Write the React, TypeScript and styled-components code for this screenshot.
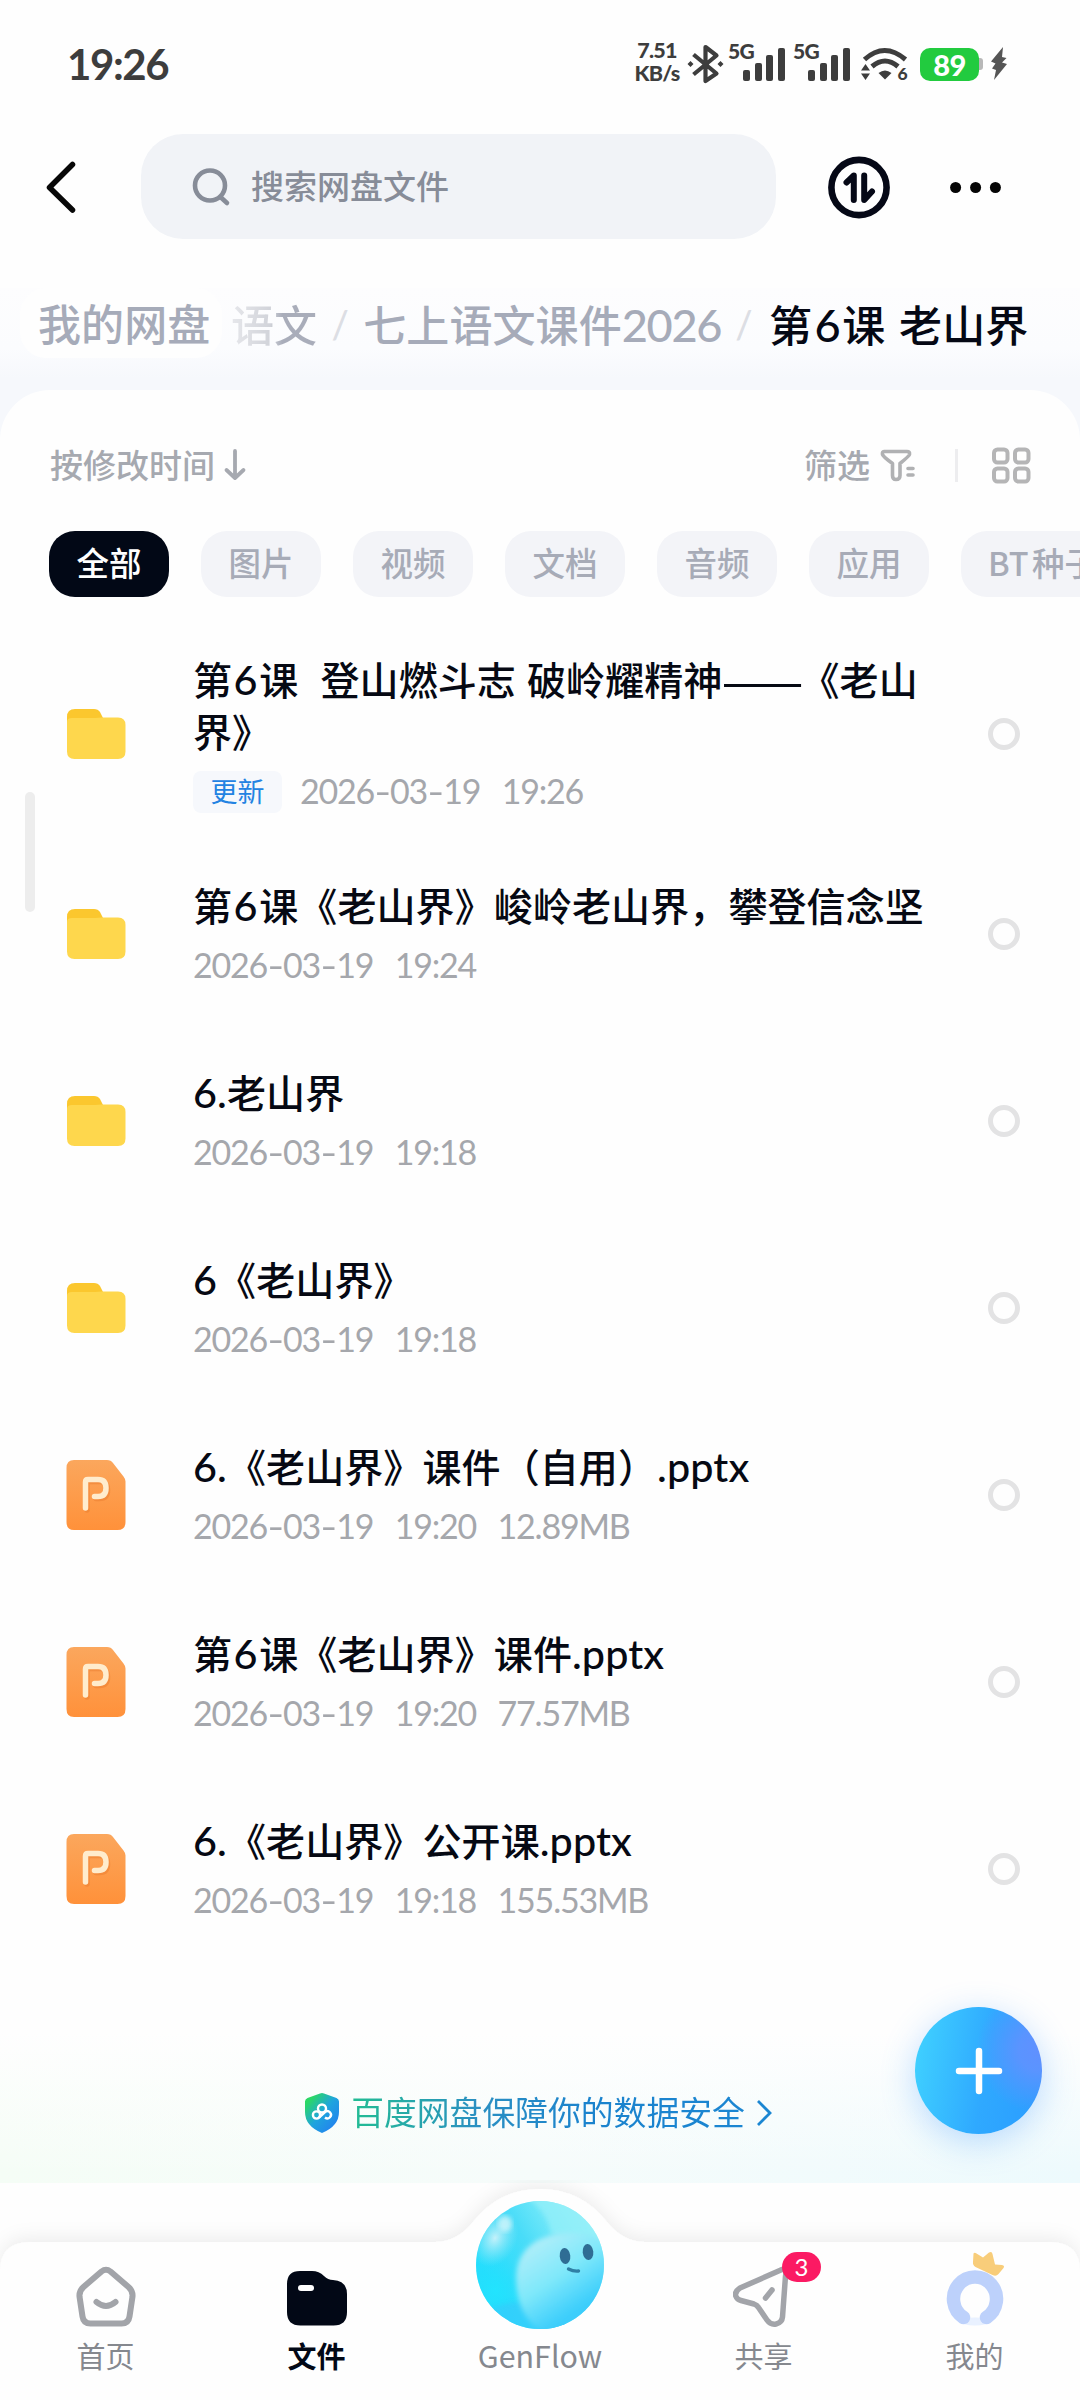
import React from "react";
import styled, { createGlobalStyle } from "styled-components";

const cjk = `"Noto Sans CJK SC", sans-serif`;

const Global = createGlobalStyle`
  html, body { margin: 0; padding: 0; background: #fefefe; }
  *, *::before, *::after { box-sizing: border-box; }
`;

const Screen = styled.div`
  position: relative;
  display: flex;
  flex-direction: column;
  width: 1080px;
  height: 2400px;
  overflow: hidden;
  background: #fefefe;
  font-family: ${cjk};
`;

const Latin = styled.span<{ $scale: number; $gap: string; $side?: string }>`
  font-family: Lato, ${cjk};
  font-size: ${(p) => p.$scale}em;
  line-height: 0;
  letter-spacing: ${(p) => p.$gap};
  margin: 0 ${(p) => p.$side ?? "0"};
`;
const LongDash = styled.span`
  display: inline-block;
  width: 78px;
  height: 50px;
  vertical-align: bottom;
  text-align: center;
  white-space: nowrap;
  letter-spacing: -1px;
  transform: scaleX(1.24);
`;

type MixedProps = { text: string; scale: number; gap: string; side?: string };
function Mixed({ text, scale, gap, side }: MixedProps) {
  return (
    <>
      {text.split(/([A-Za-z0-9.:\-]+|——)/).map((part, i, all) => {
        if (i % 2 === 0) return part;
        if (part === "——") return <LongDash key={i}>{part}</LongDash>;
        const inside = /^\d+$/.test(part) && all[0] !== "";
        return (
          <Latin key={i} $scale={scale} $gap={gap} $side={inside ? side : undefined}>
            {part}
          </Latin>
        );
      })}
    </>
  );
}

/* ---------- status bar ---------- */
const StatusBar = styled.div`
  display: flex;
  justify-content: space-between;
  align-items: center;
  height: 128px;
  padding: 0 73px 0 67px;
  color: #3d3d3d;
  font-family: Lato, sans-serif;
`;
const Clock = styled.div`
  font-size: 42px;
  font-weight: 700;
  letter-spacing: -1.4px;
`;
const StatusIcons = styled.div`
  display: flex;
  align-items: center;
`;
const Speed = styled.div`
  width: 48px;
  margin-right: 6px;
  padding-bottom: 4px;
  text-align: center;
  font-size: 21.5px;
  font-weight: 900;
  line-height: 23.5px;
  letter-spacing: -0.8px;
  white-space: nowrap;
`;
const BluetoothIcon = styled.svg`
  margin-right: -4px;
`;
const Network = styled.div`
  display: flex;
  width: 57px;
  height: 40px;
  margin-left: 8px;
`;
const NetworkType = styled.span`
  width: 15px;
  font-size: 21px;
  font-weight: 900;
  line-height: 13px;
  letter-spacing: -0.8px;
`;
const Bars = styled.div`
  display: flex;
  align-items: flex-end;
  gap: 4.6px;
  height: 36.5px;
`;
const Bar = styled.i<{ $h: number }>`
  width: 7px;
  height: ${(p) => p.$h}px;
  border-radius: 2px;
  background: #3d3d3d;
`;
const WifiIcon = styled.svg`
  margin-left: 11px;
`;
const Battery = styled.div`
  display: flex;
  align-items: center;
  justify-content: center;
  width: 59px;
  height: 33px;
  margin-left: 9px;
  border-radius: 10px;
  background: #22cb3f;
  color: #fff;
  font-size: 29px;
  font-weight: 900;
  letter-spacing: -0.5px;
`;
const BatteryTip = styled.i`
  width: 4px;
  height: 12px;
  margin-right: 8px;
  border-radius: 0 3px 3px 0;
  background: #b8b8b8;
`;

/* ---------- header ---------- */
const Header = styled.header`
  display: flex;
  align-items: center;
  height: 117px;
  padding-left: 40px;
`;
const SearchBox = styled.div`
  display: flex;
  align-items: center;
  width: 635px;
  height: 105px;
  margin-left: 61px;
  margin-right: 50px;
  padding-left: 50px;
  border-radius: 42px;
  background: #f1f3f7;
  color: #878c98;
  font-size: 33px;
  font-weight: 500;
`;
const SearchHint = styled.span`
  margin-left: 20px;
  padding-bottom: 3px;
`;
const MoreIcon = styled.svg`
  margin-left: 55px;
`;

/* ---------- breadcrumb ---------- */
const PathArea = styled.div`
  margin-top: 43px;
  height: 162px;
  background: linear-gradient(#fdfdfe 0px, #fbfcfe 60px, #f6f8fc 90px);
`;
const Path = styled.nav`
  display: flex;
  align-items: center;
  height: 70px;
  padding-left: 20px;
  font-size: 43px;
  font-weight: 500;
  letter-spacing: 0.1px;
  color: #a6abb9;
  white-space: nowrap;
`;
const PathRoot = styled.span`
  width: 202px;
  height: 70px;
  padding-left: 18px;
  border-radius: 26px;
  line-height: 68px;
  background: #fefefe;
`;
const PathFaded = styled.span`
  margin-left: 9px;
  background: linear-gradient(90deg, #e6e7eb 0%, #d2d4da 45%, #a9adba 60%);
  -webkit-background-clip: text;
  color: transparent;
`;
const Slash = styled.span`
  width: 46px;
  text-align: center;
  font-family: Lato, sans-serif;
  font-size: 38px;
  color: #dcdee4;
`;
const PathCurrent = styled.span`
  margin-left: 2px;
  color: #050814;
  word-spacing: 4px;
`;

/* ---------- file panel ---------- */
const Panel = styled.main`
  display: flex;
  flex-direction: column;
  margin-top: -60px;
  height: 1793px;
  border-radius: 50px 50px 0 0;
  background: #fefefe;
  z-index: 1;
`;
const Tools = styled.div`
  display: flex;
  align-items: center;
  height: 74px;
  margin-top: 38px;
  padding: 0 48px 0 50px;
  color: #a6a9b0;
  font-size: 33px;
  font-weight: 500;
`;
const ToolText = styled.span<{ $push?: boolean }>`
  margin-left: ${(p) => (p.$push ? "auto" : 0)};
  padding-bottom: 3px;
`;
const SortArrow = styled.svg`
  margin-left: 6px;
`;
const FunnelIcon = styled.svg`
  margin-left: 9px;
`;
const Divider = styled.i`
  width: 3px;
  height: 33px;
  margin: 0 33px 0 38px;
  background: #ededef;
`;
const Chips = styled.div`
  display: flex;
  flex: none;
  gap: 32px;
  margin-top: 29px;
  padding-left: 49px;
  overflow: hidden;
`;
const Chip = styled.span<{ $active?: boolean }>`
  flex: none;
  min-width: 120px;
  height: 66px;
  padding: 0 27px;
  border-radius: 26px;
  background: ${(p) => (p.$active ? "#020816" : "#f3f4f8")};
  color: ${(p) => (p.$active ? "#fff" : "#a7abb7")};
  font-size: 32.5px;
  font-weight: 500;
  line-height: 62px;
  text-align: center;
  word-spacing: -4px;
`;
const List = styled.ul`
  list-style: none;
  margin: 30.5px 0 0;
  padding: 0;
`;
const Item = styled.li<{ $tall?: boolean }>`
  display: flex;
  align-items: center;
  height: ${(p) => (p.$tall ? 213 : 187)}px;
  padding: 0 60px 0 66px;
`;
const Info = styled.div`
  flex: 1;
  margin-left: 67px;
  padding-bottom: 5px;
`;
const Name = styled.div`
  width: 760px;
  font-size: 39px;
  font-weight: 500;
  line-height: 52px;
  letter-spacing: 0.1px;
  word-spacing: 2.2px;
  color: #060913;
  white-space: pre-wrap;
`;
const Meta = styled.div`
  display: flex;
  align-items: center;
  height: 42px;
  margin-top: 14px;
  font-family: Lato, sans-serif;
  font-size: 34px;
  letter-spacing: -1.2px;
  color: #a5a7ac;
`;
const MetaPart = styled.span`
  margin-right: 21.5px;
`;
const Hyphen = styled.span`
  display: inline-block;
  width: 16px;
  text-align: center;
  transform: scaleX(1.35);
`;
const Tag = styled.span`
  width: 89px;
  height: 42px;
  margin-top: 3px;
  margin-right: 18px;
  border-radius: 8px;
  background: #f6f8fc;
  color: #2383e2;
  font-family: ${cjk};
  font-size: 27px;
  letter-spacing: 0;
  line-height: 40px;
  text-align: center;
`;
const Radio = styled.i`
  width: 32px;
  height: 32px;
  border: 5px solid #e3e3e4;
  border-radius: 50%;
`;
const ScrollThumb = styled.i`
  position: absolute;
  left: 25px;
  top: 792px;
  width: 10px;
  height: 120px;
  border-radius: 5px;
  background: #ededed;
  z-index: 2;
`;

/* ---------- safety banner ---------- */
const Banner = styled.div`
  display: flex;
  align-items: center;
  justify-content: center;
  height: 150px;
  margin-top: auto;
  padding: 9px 4px 0 0;
  background: linear-gradient(#fefefe, rgba(254, 254, 254, 0) 95%),
    linear-gradient(90deg, #f5fdf6, #f6fcfb 50%, #edfafd);
  font-size: 32.8px;
`;
const BannerText = styled.span`
  margin-left: 11px;
  padding-bottom: 4px;
  background: linear-gradient(90deg, #22bd93, #2b90c2 32%, #1b83cd 60%, #1b86d2);
  -webkit-background-clip: text;
  color: transparent;
`;
const BannerArrow = styled.svg`
  margin-left: 11px;
`;
const AddButton = styled.button`
  position: absolute;
  left: 915px;
  top: 2007px;
  display: flex;
  align-items: center;
  justify-content: center;
  width: 127px;
  height: 127px;
  padding: 0;
  border: 0;
  border-radius: 50%;
  background: radial-gradient(circle at 98% 34%, #6090ff 0%, #5a94ff 14%, rgba(60, 160, 255, 0) 42%),
    linear-gradient(100deg, #3fd0ff 5%, #2fa9ff 55%, #2a9cff);
  box-shadow: 0 8px 34px rgba(60, 150, 255, 0.32);
  z-index: 3;
`;

/* ---------- tab bar ---------- */
const TabBar = styled.nav`
  position: relative;
  display: flex;
  height: 217px;
  z-index: 2;
`;
const TabBack = styled.svg`
  position: absolute;
  left: 0;
  top: -3px;
`;
const Tab = styled.div<{ $wide?: boolean; $active?: boolean }>`
  position: relative;
  display: flex;
  flex-direction: column;
  align-items: center;
  width: ${(p) => (p.$wide ? 236 : 211)}px;
  padding-top: ${(p) => (p.$wide ? 15 : 83)}px;
  color: ${(p) => (p.$active ? "#020816" : "#85888e")};
  font-weight: ${(p) => (p.$active ? 700 : 400)};
`;
const TabLabel = styled.span<{ $latin?: boolean }>`
  margin-top: ${(p) => (p.$latin ? 3 : 7)}px;
  font-size: ${(p) => (p.$latin ? 30.4 : 29)}px;
  line-height: 40px;
`;
const Badge = styled.span`
  position: absolute;
  left: 124px;
  top: 69px;
  width: 39px;
  height: 30px;
  border-radius: 15px;
  background: #fb1a63;
  color: #fff;
  font-family: Lato, sans-serif;
  font-size: 24px;
  line-height: 29px;
  text-align: center;
`;

/* ---------- icons ---------- */
const FolderIcon = () => (
  <svg width="60" height="52" viewBox="0 0 60 52">
    <path d="M1 9q0-8 8-8h19q4 0 6 3l3 6v8H1z" fill="#fbc72e" />
    <path d="M1 14q0-4 5-4h23l7-.5h16q7.500 0 7.500 7.500v26.500q0 7.500-7.500 7.500H8.500q-7.500 0-7.500-7.500z" fill="#fed74d" />
  </svg>
);
const SlidesIcon = () => (
  <svg width="60" height="72" viewBox="0 0 60 72">
    <defs>
      <linearGradient id="slides" x1="0" y1="0" x2="0" y2="1">
        <stop offset="0" stopColor="#fba75d" />
        <stop offset="1" stopColor="#ff913a" />
      </linearGradient>
    </defs>
    <path d="M8 1h33q4 0 6 3l10.500 13.500q2 2.500 2 5V63q0 8-8 8H8q-7.500 0-7.500-8V9Q.5 1 8 1z" fill="url(#slides)" />
    <path d="M19.500 49V23q0-2.500 2.500-2.500h10q8 0 8 8.500t-8 8.500h-3.500" transform="translate(1.500 2)" fill="none" stroke="#e97b2c" strokeOpacity=".45" strokeWidth="5.500" strokeLinecap="round" />
    <path d="M19.500 49V23q0-2.500 2.500-2.500h10q8 0 8 8.500t-8 8.500h-3.500" fill="none" stroke="#ffeccd" strokeWidth="5.500" strokeLinecap="round" />
  </svg>
);

type File = { name: React.ReactNode; meta: string[]; kind: "folder" | "slides"; tag?: string };
const title = (t: string) => <Mixed text={t} scale={1.06} gap="0.1px" side="1.5px" />;
const files: File[] = [
  { name: title("第6课  登山燃斗志 破岭耀精神——《老山界》"), meta: ["2026-03-19", "19:26"], kind: "folder", tag: "更新" },
  { name: title("第6课《老山界》峻岭老山界，攀登信念坚"), meta: ["2026-03-19", "19:24"], kind: "folder" },
  { name: title("6.老山界"), meta: ["2026-03-19", "19:18"], kind: "folder" },
  { name: title("6《老山界》"), meta: ["2026-03-19", "19:18"], kind: "folder" },
  { name: title("6.《老山界》课件（自用）.pptx"), meta: ["2026-03-19", "19:20", "12.89MB"], kind: "slides" },
  { name: title("第6课《老山界》课件.pptx"), meta: ["2026-03-19", "19:20", "77.57MB"], kind: "slides" },
  { name: title("6.《老山界》公开课.pptx"), meta: ["2026-03-19", "19:18", "155.53MB"], kind: "slides" },
];
const spaced = (t: string) => t.split(/(-)/).map((s, i) => (s === "-" ? <Hyphen key={i}>-</Hyphen> : s));

export default function App() {
  return (
    <Screen lang="zh-CN">
      <Global />
      <StatusBar>
        <Clock>19:26</Clock>
        <StatusIcons>
          <Speed>7.51<br />KB/s</Speed>
          <BluetoothIcon width="37" height="40" viewBox="0 0 37 40" fill="none" stroke="#3d3d3d" strokeWidth="4.200" strokeLinejoin="round">
            <path d="M6.500 10.500l23 19L18.500 37V3l11 8.500-23 19" />
            <path d="M3.500 17l3 3-3 3-3-3zM33.500 17l3 3-3 3-3-3z" fill="#3d3d3d" stroke="none" />
          </BluetoothIcon>
          {[0, 1].map((n) => (
            <Network key={n}>
              <NetworkType>5G</NetworkType>
              <Bars>
                {[11, 17.5, 26, 33].map((h) => <Bar key={h} $h={h} />)}
              </Bars>
            </Network>
          ))}
          <WifiIcon width="50" height="40" viewBox="0 -2 50 40" fill="none" stroke="#3d3d3d" strokeWidth="5">
            <path d="M3.500 13.500q20-18 41 0M11 20.500q13-11 26 0" />
            <path d="M24 33.500l-6.500-6.500q6.500-5 13 0z" fill="#3d3d3d" stroke="none" />
            <path d="M0 24.500l4.500-6.500 4.500 6.500zM0 27.500h9L4.500 34z" fill="#3d3d3d" stroke="none" />
            <text x="36.500" y="34" fontSize="17.500" fontWeight="900" fontFamily="Lato" fill="#3d3d3d" stroke="none">6</text>
          </WifiIcon>
          <Battery>89</Battery>
          <BatteryTip />
          <svg width="16" height="34" viewBox="0 0 16 34">
            <path d="M12 0L0 14.500l4.500 2L1 21.500l4 1.500L3 33l13-16-5-1.500L15.500 11l-4.500-1z" fill="#555" />
          </svg>
        </StatusIcons>
      </StatusBar>

      <Header>
        <svg width="40" height="56" viewBox="0 0 40 56" fill="none" stroke="#080808" strokeWidth="5.500" strokeLinecap="round" strokeLinejoin="round">
          <path d="M32.500 5.500L9.500 28.500l23 22.500" />
        </svg>
        <SearchBox>
          <svg width="40" height="40" viewBox="0 0 40 40" fill="none" stroke="#878c98" strokeWidth="4.600" strokeLinecap="round">
            <circle cx="19" cy="18.500" r="15" />
            <path d="M30 30.500l6 5.500" />
          </svg>
          <SearchHint>搜索网盘文件</SearchHint>
        </SearchBox>
        <svg width="66" height="66" viewBox="0 0 66 66" fill="none" stroke="#050816" strokeLinecap="round" strokeLinejoin="round">
          <circle cx="33" cy="33.500" r="27.600" strokeWidth="6.600" />
          <path d="M27.800 46V21.500l-7.300 7M38.200 21.500V46l7.800-8.500" strokeWidth="6" />
        </svg>
        <MoreIcon width="58" height="20" viewBox="0 0 58 20">
          {[8.6, 28.6, 48.4].map((x) => <circle key={x} cx={x} cy="10.500" r="5.500" fill="#050505" />)}
        </MoreIcon>
      </Header>

      <PathArea>
        <Path>
          <PathRoot>我的网盘</PathRoot>
          <PathFaded>语文</PathFaded>
          <Slash>/</Slash>
          <span><Mixed text="七上语文课件2026" scale={1.05} gap="-1.4px" side="0px" /></span>
          <Slash>/</Slash>
          <PathCurrent><Mixed text="第6课 老山界" scale={1.05} gap="-1px" side="2.5px" /></PathCurrent>
        </Path>
      </PathArea>

      <Panel>
        <Tools>
          <ToolText>按修改时间</ToolText>
          <SortArrow width="28" height="34" viewBox="0 0 28 34" fill="none" stroke="#a6a9b0" strokeWidth="3.800" strokeLinecap="round" strokeLinejoin="round">
            <path d="M14 3v27M5.500 22l8.500 8 8.500-8" />
          </SortArrow>
          <ToolText $push>筛选</ToolText>
          <FunnelIcon width="38" height="34" viewBox="0 0 38 34" fill="none" stroke="#b0b1b3" strokeWidth="3.600" strokeLinecap="round" strokeLinejoin="round">
            <path d="M5 3.500h23q3 0 2.500 3-.3 1.500-9.500 9v12q0 4-4 4-3.500 0-3.500-4v-12Q4 8.500 3.500 6.500 3 3.500 5 3.500zM29 20.500h5M29 27h5" />
          </FunnelIcon>
          <Divider />
          <svg width="41" height="37" viewBox="0 0 41 37" fill="none" stroke="#b5b5b6" strokeWidth="4">
            <rect x="3" y="2.500" width="13.500" height="13" rx="3.500" />
            <rect x="24" y="2.500" width="13.500" height="13" rx="3.500" />
            <rect x="3" y="21.500" width="13.500" height="13" rx="3.500" />
            <rect x="24" y="21.500" width="13.500" height="13" rx="3.500" />
          </svg>
        </Tools>
        <Chips>
          {["全部", "图片", "视频", "文档", "音频", "应用", "BT 种子"].map((c, i) => <Chip key={c} $active={i === 0}>{c}</Chip>)}
        </Chips>
        <List>
          {files.map((f, i) => (
            <Item key={i} $tall={i === 0}>
              {f.kind === "folder" ? <FolderIcon /> : <SlidesIcon />}
              <Info>
                <Name>{f.name}</Name>
                <Meta>
                  {f.tag && <Tag>{f.tag}</Tag>}
                  {f.meta.map((m) => <MetaPart key={m}>{spaced(m)}</MetaPart>)}
                </Meta>
              </Info>
              <Radio />
            </Item>
          ))}
        </List>
        <Banner>
          <svg width="36" height="42" viewBox="0 0 36 42">
            <defs>
              <linearGradient id="shield" x1="0" y1="0" x2="1" y2="1">
                <stop offset=".15" stopColor="#2bd865" />
                <stop offset=".5" stopColor="#1fa5dd" />
                <stop offset="1" stopColor="#2377f5" />
              </linearGradient>
            </defs>
            <path d="M16 1.500q2-1 4 0l12.500 4.500q2.500 1 2.500 3.500V20q0 14-17 21Q1 34 1 20V9.500Q1 7 3.500 6z" fill="url(#shield)" />
            <g fill="none" stroke="#fff" strokeWidth="2.400">
              <circle cx="18" cy="16.500" r="4" />
              <circle cx="12.500" cy="23" r="3.600" />
              <path d="M15 25.500l6-5.500a3.600 3.600 0 1 1 0 5.500" />
            </g>
          </svg>
          <BannerText>百度网盘保障你的数据安全</BannerText>
          <BannerArrow width="16" height="28" viewBox="0 0 16 28" fill="none" stroke="#1b86d2" strokeWidth="2.800">
            <path d="M2 2l12 12L2 26" />
          </BannerArrow>
        </Banner>
      </Panel>

      <ScrollThumb />
      <AddButton>
        <svg width="50" height="50" viewBox="0 0 50 50" stroke="#fff" strokeWidth="6.500" strokeLinecap="round">
          <path d="M25 5v40M5 25h40" />
        </svg>
      </AddButton>

      <TabBar>
        <TabBack width="1080" height="220" viewBox="0 0 1080 220">
          <defs>
            <filter id="lift" x="-5%" y="-30%" width="110%" height="160%">
              <feDropShadow dx="0" dy="-4" stdDeviation="9" floodColor="#000" floodOpacity=".07" />
            </filter>
          </defs>
          <path d="M0 240V92q0-30 30-30h405q22 0 38-20 26-33 67-33t67 33q16 20 38 20h405q30 0 30 30v148z" fill="#fefefe" filter="url(#lift)" />
        </TabBack>
        <Tab>
          <svg width="62" height="62" viewBox="0 0 62 62" fill="none" stroke="#a2a4a9" strokeWidth="6" strokeLinecap="round" strokeLinejoin="round">
            <path d="M26.500 5.500q4.500-3.500 9 0l18 15.500q4.500 4 4 9.500l-3 20q-1 7-8 7h-31q-7 0-8-7l-3-20q-.5-5.500 4-9.500z" />
            <path d="M21.500 36q9.500 8 19 0" />
          </svg>
          <TabLabel>首页</TabLabel>
        </Tab>
        <Tab $active>
          <svg width="62" height="62" viewBox="0 0 62 62">
            <path d="M1 18Q1 5 14 5h12q7 0 12 5 4 4 9 4 14 1 14 14v18q0 13.500-13.500 13.500h-33Q1 59.500 1 46z" fill="#020816" />
            <rect x="12" y="19" width="16" height="6" rx="3" fill="#fff" />
          </svg>
          <TabLabel>文件</TabLabel>
        </Tab>
        <Tab $wide>
          <svg width="134" height="134" viewBox="0 0 134 134">
            <defs>
              <clipPath id="ballClip"><circle cx="67" cy="67" r="64" /></clipPath>
              <linearGradient id="ball" x1=".1" y1=".6" x2=".85" y2=".15">
                <stop offset="0" stopColor="#25defd" />
                <stop offset=".45" stopColor="#49dcf8" />
                <stop offset="1" stopColor="#9bf3fa" />
              </linearGradient>
              <linearGradient id="face" x1=".15" y1=".1" x2=".7" y2=".95">
                <stop offset="0" stopColor="#b0eef9" />
                <stop offset=".4" stopColor="#7fe8fa" />
                <stop offset=".75" stopColor="#3fcffb" />
                <stop offset="1" stopColor="#34c6fb" />
              </linearGradient>
              <radialGradient id="glow">
                <stop offset="0" stopColor="#c4f1fa" />
                <stop offset="1" stopColor="#8ae6f7" stopOpacity="0" />
              </radialGradient>
              <radialGradient id="deep">
                <stop offset="0" stopColor="#22e4fe" />
                <stop offset="1" stopColor="#22dcfd" stopOpacity="0" />
              </radialGradient>
              <filter id="soft"><feGaussianBlur stdDeviation="2.500" /></filter>
            </defs>
            <g clipPath="url(#ballClip)">
              <rect width="134" height="134" fill="url(#ball)" />
              <path d="M48 -4q26 14 30 40l60 12V-8z" fill="#93eff9" opacity=".8" filter="url(#soft)" />
              <ellipse cx="22" cy="92" rx="34" ry="36" fill="url(#deep)" />
              <ellipse cx="50" cy="130" rx="46" ry="26" fill="#37cafb" opacity=".7" filter="url(#soft)" />
              <ellipse cx="22" cy="40" rx="22" ry="30" transform="rotate(25 22 40)" fill="url(#glow)" />
              <ellipse cx="32" cy="26" rx="7" ry="8" fill="#d2f5fb" opacity=".8" filter="url(#soft)" />
              <path d="M43 78q2-34 40-42 40-6 60 20v70q-20 16-54 14-46-8-46-62z" fill="url(#face)" filter="url(#soft)" />
            </g>
            <ellipse cx="92" cy="58" rx="5.300" ry="8" transform="rotate(-6 92 58)" fill="#2f6d94" />
            <ellipse cx="115" cy="54" rx="5.300" ry="8" transform="rotate(-6 115 54)" fill="#2f6d94" />
            <path d="M95.500 71q5 2.500 10 2" stroke="#2f7fa5" strokeWidth="3.400" fill="none" strokeLinecap="round" />
          </svg>
          <TabLabel $latin>GenFlow</TabLabel>
        </Tab>
        <Tab>
          <svg width="62" height="62" viewBox="0 0 62 62" fill="none" stroke="#a2a4a9" strokeWidth="5.500" strokeLinecap="round" strokeLinejoin="round">
            <path d="M49 3.500L7 22q-6 4-4 8.500 1 3 5 4l13 3.500q3 1 4.500 3.500l8.500 12.500q3.500 5 9 4 6-1.500 6.500-7l3-41Q54 3 49 3.500z" />
            <path d="M32.500 32l6.500-8" />
          </svg>
          <Badge>3</Badge>
          <TabLabel>共享</TabLabel>
        </Tab>
        <Tab>
          <svg width="62" height="62" viewBox="0 0 62 62" overflow="visible">
            <ellipse cx="31" cy="55.500" rx="15" ry="4" fill="#e9f1ff" />
            <path d="M19.500 51.500a21.500 22 0 1 1 23 0" fill="none" stroke="#bdd1fb" strokeWidth="13.500" strokeLinecap="round" />
            <path d="M29.500-12.500q1-1.500 3 0l6.500 4 6-5q3-1.500 3.500 1.500l2.500 10.500 7 .5q3 .5 1.500 3l-5 6q-2.500 3-6 1L31.500 1q-3-2-2.500-5z" fill="#f8cd7a" />
          </svg>
          <TabLabel>我的</TabLabel>
        </Tab>
      </TabBar>
    </Screen>
  );
}
